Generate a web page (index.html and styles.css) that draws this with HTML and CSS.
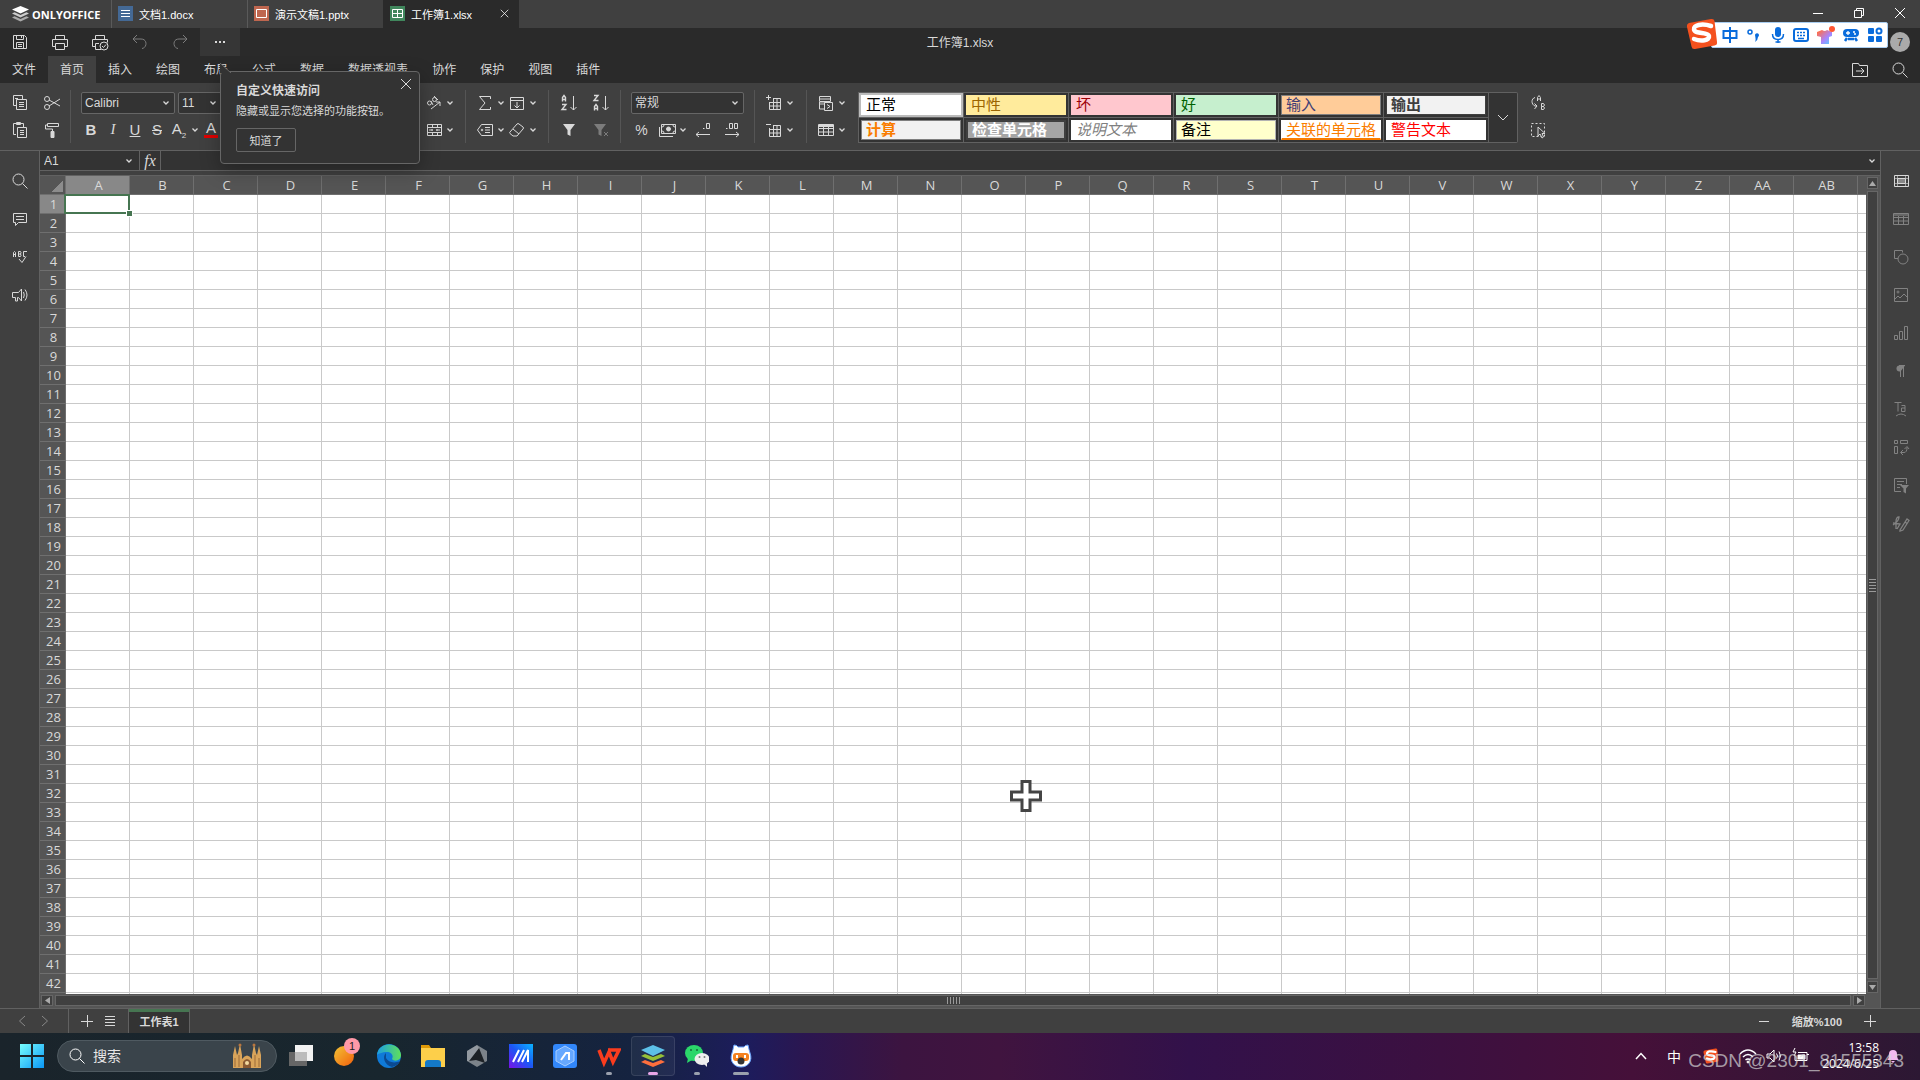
FILE: index.html
```html
<!DOCTYPE html>
<html lang="zh-CN">
<head>
  <meta charset="UTF-8" />
  <meta name="viewport" content="width=device-width, initial-scale=1.0"/>
  <title>工作簿1.xlsx</title>
  <link rel="stylesheet" href="styles.css">
</head>
<body>

  <!-- Shared icons -->
  <svg class="sprite" aria-hidden="true">
    <symbol id="chev" viewBox="0 0 8 8"><path d="M1.500 2.500 4 5l2.500-2.500" fill="none" stroke="currentColor" stroke-width="1.300"/></symbol>
    <symbol id="search" viewBox="0 0 20 20"><circle cx="8.500" cy="8.500" r="5.500"/><path d="m12.500 12.500 5 5"/></symbol>
    <symbol id="close" viewBox="0 0 12 12"><path d="m1 1 10 10M11 1 1 11"/></symbol>
    <symbol id="sogou" viewBox="0 0 32 32">
      <path d="M3 5 25 1q3-.5 3.500 2l2.500 21q.5 3-2.500 3.500L9 31q-3 .5-3.500-2.500L1 9q-.5-3 2-4z" fill="#f4511e"/>
      <path d="M25 8C16 5 7 7 8 11.500c1 5 14 2 15 6.500 1 4.500-8 6-15 3" fill="none" stroke="#fff" stroke-width="4.500" stroke-linecap="round"/>
    </symbol>
  </svg>

  <!-- Document tabs -->
  <header class="titlebar">
    <div class="brand">
      <svg width="17" height="16" viewBox="0 0 17 16"><path d="M8.500 0 17 3.500 8.500 7.500 0 3.500z" fill="#fff"/><path d="m0 7.500 2.500-1.200 6 2.700 6-2.700L17 7.500l-8.500 4z" fill="#ccc"/><path d="m0 11.500 2.500-1.200 6 2.700 6-2.700 2.500 1.200-8.500 4z" fill="#aaa"/></svg>
      <span>ONLYOFFICE</span>
    </div>
    <button class="doc-tab">
      <svg width="15" height="15" viewBox="0 0 15 15"><path d="M0 0h15v15H0z" fill="#446995"/><path d="M3 4.500h9M3 7.500h9M3 10.500h9" stroke="#fff"/></svg>
      <span>文档1.docx</span>
    </button>
    <button class="doc-tab">
      <svg width="15" height="15" viewBox="0 0 15 15"><path d="M0 0h15v15H0z" fill="#be664f"/><path d="M2.500 3.500h10v8h-10z" fill="none" stroke="#fff"/></svg>
      <span>演示文稿1.pptx</span>
    </button>
    <button class="doc-tab active">
      <svg width="15" height="15" viewBox="0 0 15 15"><path d="M0 0h15v15H0z" fill="#40865c"/><path d="M2.500 3.500h10v8h-10zM7.500 3.500v8M2.500 7.500h10" fill="none" stroke="#fff"/></svg>
      <span>工作簿1.xlsx</span>
      <svg class="line tab-close" width="9" height="9"><use href="#close"/></svg>
    </button>
    <div class="window-buttons">
      <button aria-label="最小化"><svg class="line" width="12" height="12"><path d="M1 6.500h10"/></svg></button>
      <button aria-label="还原"><svg class="line" width="12" height="12"><path d="M1.500 3.500h7v7h-7zM3.500 3.500v-2h7v7h-2"/></svg></button>
      <button aria-label="关闭"><svg class="line" width="12" height="12"><use href="#close"/></svg></button>
    </div>
  </header>

  <!-- Quick access -->
  <div class="quickbar">
    <button aria-label="保存"><svg class="line" width="20" height="20"><path d="M3.500 3.500h11l2 2v11h-13zM6.500 3.500v4h7v-4M11.500 4v2M6.500 16.500v-6h7v6M8 12.500h4M8 14.500h4"/></svg></button>
    <button aria-label="打印"><svg class="line" width="20" height="20"><path d="M5.500 7.500v-4h9v4M5.500 14.500h-3v-7h15v7h-3M5.500 11.500h9v6h-9z"/></svg></button>
    <button aria-label="快速打印"><svg class="line" width="20" height="20"><path d="M5.500 7.500v-4h9v4M5.500 14.500h-3v-7h15v3M9 11.500H5.500v6H11"/><circle cx="14" cy="14" r="4"/><path d="m12 14 1.500 1.500 2.500-3"/></svg></button>
    <button class="dim" aria-label="撤销"><svg class="line" width="20" height="20"><path d="m7 3-4 4 4 4M3 7h8c7 0 6 9 1 9.500"/></svg></button>
    <button class="dim" aria-label="重做"><svg class="line" width="20" height="20"><path d="m13 3 4 4-4 4M17 7H9C2 7 3 16 8 16.500"/></svg></button>
    <button class="more" aria-label="自定义快速访问"><svg width="20" height="20" fill="currentColor"><path d="M5 9h2v2H5zM9 9h2v2H9zM13 9h2v2h-2z"/></svg></button>
    <h1>工作簿1.xlsx</h1>
    <span class="avatar">7</span>
  </div>

  <nav class="menu">
    <button>文件</button>
    <button class="active">首页</button>
    <button>插入</button>
    <button>绘图</button>
    <button>布局</button>
    <button>公式</button>
    <button>数据</button>
    <button>数据透视表</button>
    <button>协作</button>
    <button>保护</button>
    <button>视图</button>
    <button>插件</button>
    <div class="menu-right">
      <button aria-label="打开文件位置"><svg class="line" width="20" height="20"><path d="M2.500 16.500v-13h6l1 2h8v11zM6 11h8M11 8l3 3-3 3"/></svg></button>
      <button aria-label="查找"><svg class="line" width="20" height="20"><use href="#search"/></svg></button>
    </div>
  </nav>

  <!-- Toolbar -->
  <div class="ribbon">
    <div class="group clipboard">
      <div class="row">
        <button class="tool" aria-label="复制"><svg class="line" width="20" height="20"><path d="M6 12.500H3.500v-10h9V6M5 5.500h3M6.500 6.500h10v10h-10zM9 9.500h5M9 11.500h5M9 13.500h5"/></svg></button>
        <button class="tool" aria-label="剪切"><svg class="line" width="20" height="20"><circle cx="5" cy="6" r="2.500"/><circle cx="5" cy="14" r="2.500"/><path d="m7 7 11 6M7 13l11-7"/></svg></button>
      </div>
      <div class="row">
        <button class="tool" aria-label="粘贴"><svg class="line" width="20" height="20"><path d="M6 14.500H3.500v-11h10V7M6.500 2.500h4v2h-4zM7.500 7.500h9v10h-9zM10 10.500h4M10 12.500h4M10 14.500h4"/></svg></button>
        <button class="tool" aria-label="格式刷"><svg class="line" width="20" height="20"><path d="M5.500 3.500h11v3h-11zM5 5H3.500v4h7v3"/><path d="M9 11.500h3v6H9z" fill="currentColor"/></svg></button>
      </div>
    </div>
    <div class="group font">
      <div class="row">
        <label class="combo font-name"><select aria-label="字体"><option>Calibri</option></select><svg class="chev"><use href="#chev"/></svg></label>
        <label class="combo font-size"><select aria-label="字号"><option>11</option></select><svg class="chev"><use href="#chev"/></svg></label>
      </div>
      <div class="row letters">
        <button class="letter"><b>B</b></button>
        <button class="letter"><i>I</i></button>
        <button class="letter"><u>U</u></button>
        <button class="letter"><s>S</s></button>
        <button class="split"><span class="sub">A<sub>2</sub></span><svg class="chev"><use href="#chev"/></svg></button>
        <button class="letter"><span class="font-color">A</span></button>
      </div>
    </div>
    <div class="group align">
      <div class="row">
        <button class="split" aria-label="方向"><svg class="line" width="20" height="20"><circle cx="5.500" cy="10" r="2"/><path d="m7 8 2 4M10 3l4 4"/><circle cx="10.500" cy="6.500" r="2"/><path d="m7 16 9-7M12 9h4v4"/></svg><svg class="chev"><use href="#chev"/></svg></button>
      </div>
      <div class="row">
        <button class="split" aria-label="合并"><svg class="line" width="20" height="20"><path d="M3.500 4.500h14v11h-14zM3.500 7.500h14M3.500 12.500h14M8.500 4.500v3M13.500 4.500v3M8.500 12.500v3M13.500 12.500v3M5 10h4M12 10h4M8 9v2M13 9v2"/></svg><svg class="chev"><use href="#chev"/></svg></button>
      </div>
    </div>
    <div class="group edit">
      <div class="row">
        <button class="split" aria-label="求和"><svg class="line" width="20" height="20"><path d="M15.500 6V3.500h-11L10 10l-5.500 6.500h11V14"/></svg><svg class="chev"><use href="#chev"/></svg></button>
        <button class="split" aria-label="填充"><svg class="line" width="20" height="20"><path d="M3.500 4.500h13v12h-13zM3.500 7.500h13M10 9v6M7.500 12.500 10 15l2.500-2.500"/></svg><svg class="chev"><use href="#chev"/></svg></button>
      </div>
      <div class="row">
        <button class="split" aria-label="命名区域"><svg class="line" width="20" height="20"><path d="M6.500 4.500h11v11h-11l-4-5.500zM10 7.500h5M10 10h5M10 12.500h5"/><circle cx="7" cy="10" r=".8"/></svg><svg class="chev"><use href="#chev"/></svg></button>
        <button class="split" aria-label="清除"><svg class="line" width="20" height="20"><path d="m3 12 7-8q1-1 2 0l4 3q1 1 0 2l-6 7H6l-3-2.500q-.8-.8 0-1.500zM6 9l6 5"/></svg><svg class="chev"><use href="#chev"/></svg></button>
      </div>
    </div>
    <div class="group sort">
      <div class="row">
        <button class="tool" aria-label="升序"><svg class="line" width="20" height="20"><path d="M3.500 8.500V4.500l1.500-2 1.500 2v4M3.500 6.500h3M3 11.500h4l-4 5h4.500" stroke-width="1.400"/><path d="M14.500 3v14M11.500 14l3 3 3-3"/></svg></button>
        <button class="tool" aria-label="降序"><svg class="line" width="20" height="20"><path d="M3 2.500h4l-4 5h4.500M3.500 17.500v-4l1.500-2 1.500 2v4M3.500 15.500h3" stroke-width="1.400"/><path d="M14.500 3v14M11.500 14l3 3 3-3"/></svg></button>
      </div>
      <div class="row">
        <button class="tool" aria-label="筛选"><svg width="20" height="20" fill="currentColor"><path d="M4 4h12l-4.500 6v6l-3-1.500V10z"/></svg></button>
        <button class="tool dim" aria-label="清除筛选"><svg class="line" width="20" height="20"><path d="M3 4h12l-4.500 6v6l-3-1.500V10z" fill="currentColor" stroke="none"/><path d="m13 12 4 4M17 12l-4 4"/></svg></button>
      </div>
    </div>
    <div class="group number">
      <div class="row">
        <label class="combo number-format"><select aria-label="数字格式"><option>常规</option></select><svg class="chev"><use href="#chev"/></svg></label>
      </div>
      <div class="row number-tools">
        <button class="narrow percent">%</button>
        <button class="split" aria-label="会计格式"><svg class="line" width="20" height="20"><path d="M4.500 4.500h14v9h-14zM2.500 7v9.500H16"/><circle cx="11.500" cy="9" r="2" fill="currentColor"/><path d="M5 7q2 0 2-2M16 5q0 2 2 2M5 11q2 0 2 2M16 13q0-2 2-2"/></svg><svg class="chev"><use href="#chev"/></svg></button>
        <button class="narrow" aria-label="减少小数位"><svg class="line" width="20" height="20"><path d="M10 8.500h1.500M13.500 3.500h3v5h-3zM3 14.500h14M6 12l-3 2.500L6 17"/></svg></button>
        <button class="narrow" aria-label="增加小数位"><svg class="line" width="20" height="20"><path d="M4 8.500h1.500M7.500 3.500h3v5h-3zM12.500 3.500h3v5h-3zM3 14.500h14M14 12l3 2.500-3 2.500"/></svg></button>
      </div>
    </div>
    <div class="group cells">
      <div class="row">
        <button class="split" aria-label="插入单元格"><svg class="line" width="20" height="20"><path d="M4.500 2v5M2 4.500h5M9 5.500h7.500v11h-11V9M5.500 9.500h11M5.500 13h11M9.500 5.500v11M13 5.500v11"/></svg><svg class="chev"><use href="#chev"/></svg></button>
      </div>
      <div class="row">
        <button class="split" aria-label="删除单元格"><svg class="line" width="20" height="20"><path d="M2 4.500h5M9 5.500h7.500v11h-11V8M5.500 9.500h11M5.500 13h11M9.500 5.500v11M13 5.500v11"/></svg><svg class="chev"><use href="#chev"/></svg></button>
      </div>
    </div>
    <div class="group styles">
      <div class="row">
        <button class="split" aria-label="条件格式"><svg class="line" width="20" height="20"><path d="M3.500 8.500v-5h11v5H3.500zM3.500 6h11M3.500 9v7H8"/><path d="M4 9h5v3H4z" fill="#888" stroke="none"/><path d="M8.500 9.500h8v8h-8zM11 11.500l3 2-3 2"/></svg><svg class="chev"><use href="#chev"/></svg></button>
      </div>
      <div class="row">
        <button class="split" aria-label="表格模板"><svg class="line" width="20" height="20"><path d="M2.500 4.500h15v11h-15zM2.500 8.500h15M2.500 12h15M7.500 7v8.500M12.500 7v8.500"/><path d="M3 5h14v2H3z" fill="currentColor" stroke="none"/></svg><svg class="chev"><use href="#chev"/></svg></button>
      </div>
    </div>
    <div class="gallery">
      <button class="selected"><span class="style-normal">正常</span></button>
      <button><span class="style-neutral">中性</span></button>
      <button><span class="style-bad">坏</span></button>
      <button><span class="style-good">好</span></button>
      <button><span class="style-input">输入</span></button>
      <button><span class="style-output">输出</span></button>
      <button><span class="style-calc">计算</span></button>
      <button><span class="style-check">检查单元格</span></button>
      <button><span class="style-note">说明文本</span></button>
      <button><span class="style-memo">备注</span></button>
      <button><span class="style-linked">关联的单元格</span></button>
      <button><span class="style-warn">警告文本</span></button>
    </div>
    <button class="gallery-more" aria-label="更多样式"><svg class="line" width="12" height="8"><path d="m1 1 5 5 5-5"/></svg></button>
    <div class="group replace">
      <div class="row"><button class="tool" aria-label="替换"><svg class="line" width="20" height="20"><path d="M7 4.500c-4 1-4 7 0 8.500h2M6.500 10.500 9 13l-2.500 3M9.500 8V4.500l1.500-2 1.500 2V8M9.500 6h3M13.500 10.500h2q2 1.500 0 3h-2zM13.500 13.500h2q2 1.500 0 3h-2z"/></svg></button></div>
      <div class="row"><button class="tool" aria-label="全选"><svg class="line" width="20" height="20"><path d="M3.500 3.500h13v13h-13z" stroke-dasharray="2 2"/><path d="M10 7v9l2-2 2 4 1.500-1-1.500-3.500h3z" fill="#404040"/></svg></button></div>
    </div>
  </div>

  <main class="workspace">
    <aside class="rail left">
      <button aria-label="查找"><svg class="line" width="20" height="20"><use href="#search"/></svg></button>
      <button aria-label="批注"><svg class="line" width="20" height="20"><path d="M3.500 4.500h13v9h-8l-3 3v-3h-2zM6 7.500h8M6 10.500h8"/></svg></button>
      <button aria-label="拼写检查"><svg class="line" width="20" height="20"><path d="M3.500 10V5.500l1-1 1 1V10M3.500 7.500h2M8.500 4.500v5h2q1-1 0-2.500 1-1.500 0-2.500zM8.500 7h2M17 4.500h-3.500v5H15M9 12l3 3.500 4-6"/></svg></button>
      <button aria-label="反馈和支持"><svg class="line" width="20" height="20"><path d="M2.500 7.500h6l3-3.500v12l-3-3.500h-1V16h-2v-3.500h-3zM13.500 7q1.500 3 0 6M15 4.500q4 5.500 0 11"/></svg></button>
    </aside>

    <section class="editor">
      <div class="formula-bar">
        <div class="name-box"><input type="text" value="A1" aria-label="名称框"><svg class="chev"><use href="#chev"/></svg></div>
        <button class="fx">fx</button>
        <input class="formula" type="text" aria-label="编辑栏">
        <button class="expand" aria-label="展开"><svg class="chev"><use href="#chev"/></svg></button>
      </div>
      <div class="sheet">
        <div class="viewport">
          <table id="grid"></table>
          <svg class="cell-cursor" width="32" height="32"><path d="M12 1.500h8V12h10.500v8H20v10.500h-8V20H1.500v-8H12z" fill="#fff" stroke="#444" stroke-width="3"/></svg>
        </div>
        <div class="vscroll">
          <button aria-label="向上"><svg width="7" height="5"><path d="M3.500 0 7 5H0z"/></svg></button>
          <div class="thumb"><i></i></div>
          <button aria-label="向下"><svg width="7" height="5"><path d="M0 0h7L3.500 5z"/></svg></button>
        </div>
      </div>
      <div class="hscroll">
        <button aria-label="向左"><svg width="5" height="7"><path d="M5 0v7L0 3.500z"/></svg></button>
        <div class="thumb"><i></i></div>
        <button aria-label="向右"><svg width="5" height="7"><path d="M0 0v7l5-3.500z"/></svg></button>
      </div>
    </section>

    <aside class="rail right">
      <button class="on" aria-label="单元格设置"><svg class="line" width="20" height="20"><path d="M3.500 4.500h14v11h-14z"/><path d="M4 7.500h13M4 12.500h13M6.500 5v10M14.500 5v10" stroke="#999"/><path d="M6.500 7.500h8v5h-8z" fill="#888"/></svg></button>
      <button aria-label="表格设置"><svg class="line" width="20" height="20"><path d="M2.500 4.500h15v11h-15zM2.500 8.500h15M2.500 12h15M7.500 7v8.500M12.500 7v8.500"/><path d="M3 5h14v2H3z" fill="#666" stroke="none"/></svg></button>
      <button aria-label="形状设置"><svg class="line" width="20" height="20"><path d="M7 11.500H3.500v-8h8v2"/><circle cx="12" cy="12" r="5"/></svg></button>
      <button aria-label="图像设置"><svg class="line" width="20" height="20"><path d="M3.500 3.500h13v13h-13zM4 14l3-3 2 2 4-4 3 3"/><circle cx="7" cy="7" r="1"/></svg></button>
      <button aria-label="图表设置"><svg class="line" width="20" height="20"><path d="M3.500 12.500h3v4h-3zM8.500 8.500h3v8h-3zM13.500 3.500h3v13h-3z"/></svg></button>
      <button aria-label="段落设置"><svg class="line" width="20" height="20"><path d="M14 4.500H8.500a3 3 0 0 0 0 6h1z" fill="currentColor" stroke="none"/><path d="M9.500 16V4.500M12.500 16V4.500M8 4.500h6"/></svg></button>
      <button aria-label="文字艺术设置"><svg class="line" width="20" height="20"><path d="M3.500 3.500h7M7 3.500v9M10.500 6.500h3.500v6h-3.500v-3.500h3.500M5 17q5-4 10 0"/></svg></button>
      <button aria-label="透视表设置"><svg class="line" width="20" height="20"><path d="M3.500 3.500h3v3h-3zM9.500 3.500h7v3h-7zM3.500 9.500h3v7h-3zM10 15.500h3q3 0 3-5M12 13l-2.500 2.500L12 18M13.500 12 16 9.500l2 2.500"/></svg></button>
      <button aria-label="切片器设置"><svg class="line" width="20" height="20"><path d="M10 16.500H3.500v-13h12V9M6 6.500h7M6 9.500h5M6 12.500h3"/><path d="M9 10h9l-3 3.500v5l-2.500-1.500v-3.500z" fill="currentColor" stroke="none"/></svg></button>
      <button aria-label="签名设置"><svg class="line" width="20" height="20"><path d="M2 12q6-4 6-8-3 0-3 5v7M2 10l7 1-3 5M9 17l7-11 2 1.500L12 17l-3 1zM14 9l2 1.500" stroke-width="1.300"/></svg></button>
    </aside>
  </main>

  <!-- Sheet tabs -->
  <footer class="statusbar">
    <div class="sheet-nav">
      <button aria-label="上一张"><svg class="line" width="8" height="12"><path d="M7 1 1.500 6 7 11"/></svg></button>
      <button aria-label="下一张"><svg class="line" width="8" height="12"><path d="m1 1 5.500 5L1 11"/></svg></button>
    </div>
    <div class="sheet-actions">
      <button aria-label="添加工作表"><svg class="line" width="12" height="12"><path d="M0 6.500h12M6.500 0v12"/></svg></button>
      <button aria-label="工作表列表"><svg class="line" width="12" height="12"><path d="M1 1.500h10M1 4.500h10M1 7.500h10M1 10.500h10"/></svg></button>
    </div>
    <button class="sheet-tab">工作表1</button>
    <div class="zoom">
      <button aria-label="缩小"><svg class="line" width="12" height="12"><path d="M1 6.500h10"/></svg></button>
      <span>缩放%100</span>
      <button aria-label="放大"><svg class="line" width="12" height="12"><path d="M0 6.500h12M6.500 0v12"/></svg></button>
    </div>
  </footer>

  <!-- Windows taskbar -->
  <div class="taskbar">
    <button class="start" aria-label="开始"><svg width="24" height="24"><defs><linearGradient id="win" x2="1" y2="1"><stop stop-color="#7ff"/><stop offset="1" stop-color="#0a96f5"/></linearGradient></defs><path d="M0 0h11v11H0zM13 0h11v11H13zM0 13h11v11H0zM13 13h11v11H13z" fill="url(#win)"/></svg></button>
    <label class="search">
      <svg class="line" width="20" height="20"><use href="#search"/></svg>
      <input type="text" placeholder="搜索" aria-label="搜索">
      <svg width="30" height="26"><path d="M1 25V12l2-9 2 9 1-2 2-9 2 11v4q5-7 10 0v-4l2-11 2 9 1 2 2-9 2 9v13z" fill="#d9a45a"/><path d="M11 25v-6q4-6 8 0v6z" fill="#8a5a33"/><path d="M3 15v9M7 12v12M23 12v12M27 15v9" stroke="#9b6a38"/><circle cx="15" cy="20" r="2" fill="#f3d9a0"/><circle cx="8" cy="2" r="1.500" fill="#b9763f"/><circle cx="22" cy="2" r="1.500" fill="#b9763f"/></svg>
    </label>
    <div class="apps">
      <button aria-label="任务视图"><svg width="24" height="24"><path d="M0 8h18v14H0z" fill="#666"/><path d="M6 1h18v16H6z" fill="#f2f2f2"/><path d="M6 8h12v9H6z" fill="#bbb"/></svg></button>
      <button aria-label="小组件"><svg width="24" height="24"><defs><linearGradient id="org" y2="1" x2="1"><stop stop-color="#f2c335"/><stop offset="1" stop-color="#f2600d"/></linearGradient></defs><circle cx="11" cy="12" r="10" fill="url(#org)"/></svg><span class="badge">1</span></button>
      <button aria-label="Edge"><svg width="24" height="24"><defs><linearGradient id="edge"><stop stop-color="#1b9de2"/><stop offset="1" stop-color="#5fe05a"/></linearGradient></defs><circle cx="12" cy="12" r="12" fill="#0f7ad8"/><path d="M0 11C1-3 23-3 24 11c0 6-7 7-9 4 2-4-1-7-5-7-5 0-9 2-10 3z" fill="url(#edge)"/><path d="M9 9c-4 3-2 12 6 14 4-1 7-3 8-6-6 3-12 1-14-3z" fill="#0b4a92"/></svg></button>
      <button aria-label="文件资源管理器"><svg width="24" height="24"><path d="M0 1h8l2 3H0z" fill="#e09a08"/><path d="M0 4h24v19H0z" fill="#fdcf4a"/><path d="M4 23v-4q0-3 3-3h10q3 0 3 3v4z" fill="#1479c8"/></svg></button>
      <button aria-label="Armoury Crate"><svg width="24" height="24"><path d="m12 1 10 6v10l-10 6-10-6V7z" fill="#7c838a"/><path d="m14 4 6 15-9-3-7 1z" fill="#1c2126"/><path d="m12 1 2 3L4 17l-2 0V7z" fill="#b7bcc1" opacity=".4"/></svg></button>
      <button aria-label="MyASUS"><svg width="24" height="24"><defs><linearGradient id="asus" y1="1" y2="0" x2="1"><stop stop-color="#7a12e8"/><stop offset=".5" stop-color="#1d55f5"/><stop offset="1" stop-color="#0ab4ff"/></linearGradient></defs><path d="M0 0h24v24H0z" fill="url(#asus)"/><path d="m4 18 6-12M9 18l6-12M13 18l6-12v12" stroke="#fff" stroke-width="2" fill="none"/></svg></button>
      <button aria-label="ASUS"><svg width="24" height="24"><rect width="24" height="24" rx="3" fill="#3287fa"/><path d="m12 2 9 5v10l-9 5-9-5V7z" fill="#66a8ff" stroke="#a8ceff"/><path d="m8 16 5-7h3v7" stroke="#fff" stroke-width="2" fill="none"/></svg></button>
      <button aria-label="WPS"><svg width="24" height="24"><path d="m2 6 5 13 5-11 4 10 6-12H11" fill="none" stroke="#fa3c1e" stroke-width="3.500"/></svg><i class="dot"></i></button>
      <button class="current" aria-label="ONLYOFFICE"><svg width="24" height="24"><path d="m0 18 4-2 8 3 8-3 4 2-12 5z" fill="#ff6f3d"/><path d="m0 12 4-2 8 3 8-3 4 2-12 5z" fill="#95c038"/><path d="m12 1 12 5-12 6L0 6z" fill="#5dc0e8"/></svg><i class="dot"></i></button>
      <button aria-label="微信"><svg width="24" height="24"><ellipse cx="9" cy="9" rx="9" ry="8" fill="#2bd66a"/><path d="m3 14-1 5 5-3z" fill="#2bd66a"/><ellipse cx="17" cy="15" rx="7.500" ry="6" fill="#eee"/><path d="m19 20 3 3v-4z" fill="#eee"/><g fill="#176b3a"><circle cx="6" cy="6" r="1"/><circle cx="12" cy="6" r="1"/></g><g fill="#777"><circle cx="14.500" cy="13" r="1"/><circle cx="19.500" cy="13" r="1"/></g></svg><i class="dot"></i></button>
      <button aria-label="助手"><svg width="24" height="24"><path d="M5 1q3 0 4 2h6q1-2 4-2 1 5 2 8c3 8-2 14-9 14S0 17 3 9q1-3 2-8z" fill="#fff" stroke="#6aa5ff"/><rect x="4" y="9" width="16" height="8" rx="3" fill="#f58220"/><path d="M8 11v3M16 11v3" stroke="#fff" stroke-width="2"/><circle cx="12" cy="17" r="3.500" fill="#333"/></svg><i class="dot wide"></i></button>
    </div>
    <div class="tray">
      <svg class="line up" width="12" height="8"><path d="m1 7 5-5.500L11 7" stroke-width="1.500"/></svg>
      <span class="lang">中</span>
      <svg class="sg" width="16" height="16"><use href="#sogou"/></svg>
      <svg class="line" width="18" height="16"><path d="M1 6q8-8 16 0M4 9q5-5 10 0M6.500 12q2.500-2 5 0" stroke-width="1.500"/><circle cx="9" cy="14" r="1" fill="#fff"/></svg>
      <svg class="line" width="18" height="16"><path d="M2 6h3l4-4v12l-4-4H2zM11.500 5.500q2 2.500 0 5M14 3.500q3 4.500 0 9"/></svg>
      <svg class="line" width="18" height="16"><path d="M7 4.500h9v8H4V8M4 0 2 4h3L3 8M16 6.500h2"/><path d="M7 7h7v4H7z" fill="#fff"/></svg>
      <div class="clock"><time>13:58</time><time>2024/6/25</time></div>
      <svg class="bell" width="12" height="16"><path d="M0 12q2-1 2-6a4 4 0 0 1 8 0q0 5 2 6zM4 13h4l-2 2z" fill="#f3b9f0"/></svg>
    </div>
  </div>

  <!-- Quick access hint -->
  <div class="hint" role="dialog">
    <svg class="pointer" width="12" height="10"><path d="M0 0v10h11z" fill="#333"/><path d="m0 0 11 10" stroke="#666"/></svg>
    <button class="hint-close" aria-label="关闭"><svg class="line" width="12" height="12"><use href="#close"/></svg></button>
    <h2>自定义快速访问</h2>
    <p>隐藏或显示您选择的功能按钮。</p>
    <button class="ok">知道了</button>
  </div>

  <!-- Input method bar -->
  <div class="ime">
    <svg class="ime-logo" width="32" height="32"><use href="#sogou"/></svg>
    <svg width="16" height="16"><path d="M1.500 4h13v7h-13zM8 0v16" fill="none" stroke="#0a6cdc" stroke-width="2"/></svg>
    <svg width="16" height="16"><circle cx="4" cy="5" r="2" fill="none" stroke="#0a6cdc" stroke-width="1.500"/><path d="M9 8a2 2 0 1 1 3 2q0 3-3 5 1-2 .5-4z" fill="#0a6cdc"/></svg>
    <svg width="16" height="16"><rect x="5" width="6" height="10" rx="3" fill="#0a6cdc"/><path d="M2.500 7q0 5.500 5.500 5.500T13.500 7M8 13v3M5.500 15h5" fill="none" stroke="#0a6cdc" stroke-width="1.500"/></svg>
    <svg width="16" height="16"><rect x="1" y="2" width="14" height="12" rx="2" fill="none" stroke="#0a6cdc" stroke-width="2"/><path d="M4 5.500h8M4 8.500h8" stroke="#0a6cdc" stroke-width="1.500" stroke-dasharray="2 1"/><path d="M5 11.500h6" stroke="#0a6cdc" stroke-width="1.500"/></svg>
    <svg width="18" height="18"><defs><linearGradient id="shirt" x2="1" y2="1"><stop offset=".1" stop-color="#ff6f4a"/><stop offset=".6" stop-color="#a884ff"/><stop offset="1" stop-color="#4ad8ff"/></linearGradient></defs><path d="M5 4q3 2 5 0l5 2v4l-3 1v7H4v-7l-4-1V6z" fill="url(#shirt)"/><circle cx="15" cy="3" r="3" fill="#ff5533"/></svg>
    <svg width="16" height="16"><path d="M4 2h8q4 0 4 4t-4 4H4Q0 10 0 6t4-4z" fill="#0a6cdc"/><path d="M5 4v4M3 6h4M10 5h2M11 7h2" stroke="#fff" stroke-width="1.300"/><path d="m2 14 2-3M14 14l-2-3M5 12h6" stroke="#0a6cdc" stroke-width="2.500"/></svg>
    <svg width="16" height="16" fill="#0a6cdc"><rect x="1" y="1" width="6" height="6" rx="1"/><circle cx="12" cy="4" r="2.500" fill="none" stroke="#0a6cdc" stroke-width="2"/><rect x="1" y="9" width="6" height="6" rx="1"/><rect x="9" y="9" width="6" height="6" rx="1"/></svg>
  </div>

  <div class="watermark">CSDN @2301_81555343</div>

  <script src="grid.js"></script>
</body>
</html>
```
FILE: styles.css
```css
* {
  box-sizing: border-box;
}

body {
  margin: 0;
  height: 100vh;
  display: flex;
  flex-direction: column;
  overflow: hidden;
  background: #404040;
  color: #d9d9d9;
  font-family: "Liberation Sans", "Noto Sans CJK SC", sans-serif;
  font-size: 12px;
}

button,
input,
select {
  font: inherit;
  color: inherit;
  background: none;
  border: 0;
  margin: 0;
  padding: 0;
  border-radius: 0;
  outline: 0;
}

button {
  display: flex;
  align-items: center;
  justify-content: center;
}

svg {
  display: block;
  flex: none;
}

.sprite {
  position: absolute;
  width: 0;
  height: 0;
}

.line {
  fill: none;
  stroke: currentColor;
}

.chev {
  width: 8px;
  height: 8px;
}

.dim {
  color: #7c7c7c;
}

/* Title bar */
.titlebar {
  display: flex;
  height: 28px;
  flex: none;
  padding-bottom: 0;
  color: #fff;
}

.brand {
  width: 111px;
  display: flex;
  align-items: center;
  gap: 3px;
  padding-left: 12px;
  font: bold 11px "Open Sans", sans-serif;
}

.doc-tab {
  width: 136px;
  justify-content: flex-start;
  gap: 6px;
  padding: 0 0 1px 6px;
  border-left: 1px solid #5a5a5a;
  font-size: 11px;
}

.doc-tab.active {
  background: #2a2a2a;
  border-color: #2a2a2a;
}

.tab-close {
  margin-left: auto;
  margin-right: 10px;
}

.window-buttons {
  margin-left: auto;
  display: flex;
}

.window-buttons button {
  width: 41px;
  padding-bottom: 2px;
}

/* Quick access */
.quickbar {
  display: flex;
  align-items: center;
  height: 28px;
  flex: none;
  background: #2a2a2a;
  position: relative;
}

.quickbar button {
  width: 40px;
  height: 28px;
}

.quickbar .more {
  background: #363636;
}

.quickbar h1 {
  position: absolute;
  left: 0;
  right: 0;
  margin: 0;
  padding-bottom: 2px;
  text-align: center;
  font-size: 12px;
  font-weight: normal;
  pointer-events: none;
}

.avatar {
  margin-left: auto;
  margin-right: 10px;
  width: 20px;
  height: 20px;
  line-height: 20px;
  border-radius: 50%;
  background: #aaa;
  color: #333;
  text-align: center;
  font-size: 11px;
}

.menu {
  display: flex;
  height: 27px;
  flex: none;
  background: #2a2a2a;
}

.menu button {
  padding: 0 12px 2px;
}

.menu .active {
  background: #404040;
}

.menu-right {
  margin-left: auto;
  display: flex;
}

.menu-right button {
  width: 40px;
  padding: 0;
}

/* Ribbon */
.ribbon {
  display: flex;
  height: 68px;
  flex: none;
  padding: 7px 0;
  border-bottom: 1px solid #616161;
}

.group {
  display: flex;
  flex-direction: column;
  border-right: 1px solid #555;
}

.row {
  display: flex;
  align-items: center;
  height: 27px;
}

.row:first-child {
  height: 28px;
}

.tool {
  width: 32px;
}

.narrow {
  width: 29px;
}

.split {
  width: 32px;
  gap: 2px;
}

.letter {
  width: 22px;
  font-size: 15px;
}

.letter i {
  font-family: "Liberation Serif", serif;
}

.sub {
  width: 20px;
  font-size: 15px;
}

.sub sub {
  font-size: 8px;
}

.font-color {
  border-bottom: 3px solid #e00000;
  line-height: 14px;
  padding: 0 2px;
}

.percent {
  font-size: 14px;
}

.clipboard {
  width: 71px;
  padding-left: 4px;
}

.font {
  width: 352px;
  padding-left: 10px;
  border-right: 0;
}

.font .row {
  gap: 3px;
}

.font .letters {
  gap: 0;
  margin-left: -1px;
}

.align {
  width: 43px;
}

.edit {
  width: 83px;
  padding-left: 8px;
}

.sort {
  width: 72px;
  padding-left: 4px;
}

.number {
  width: 134px;
  padding-left: 10px;
}

.number-tools {
  margin-left: -4px;
}

.cells {
  width: 52px;
  padding-left: 8px;
}

.styles {
  width: 51px;
  padding-left: 8px;
  border-right: 0;
}

.combo {
  position: relative;
  height: 22px;
  background: #333;
  border: 1px solid #666;
  border-radius: 2px;
}

.combo select {
  appearance: none;
  width: 100%;
  height: 20px;
  padding-left: 3px;
}

.combo .chev {
  position: absolute;
  right: 4px;
  top: 6px;
}

.font-name {
  width: 94px;
}

.font-size {
  width: 48px;
}

.font-size .chev {
  right: 8px;
}

.number-format {
  width: 113px;
}

/* Cell styles */
.gallery {
  display: grid;
  grid-template-columns: repeat(6, 105px);
  grid-template-rows: 25px 25px;
  height: 51px;
  margin-top: 2px;
  border-top: 1px solid #616161;
  border-left: 1px solid #616161;
}

.gallery button {
  padding: 2px;
  background: #333;
  border-right: 1px solid #616161;
  border-bottom: 1px solid #616161;
}

.gallery .selected {
  background: #bbb;
}

.gallery span {
  width: 100%;
  height: 20px;
  padding-left: 4px;
  border: 1px solid transparent;
  background: #fff;
  color: #000;
  font-size: 15px;
  line-height: 17px;
  text-align: left;
}

.gallery .style-neutral {
  background: #ffeb9c;
  color: #9c6500;
}

.gallery .style-bad {
  background: #ffc7ce;
  color: #9c0006;
}

.gallery .style-good {
  background: #c6efce;
  color: #006100;
}

.gallery .style-input {
  background: #ffcc99;
  color: #3f3f76;
  border-color: #7f7f7f;
}

.gallery .style-output {
  background: #f2f2f2;
  color: #3f3f3f;
  border-color: #3f3f3f;
  font-weight: bold;
}

.gallery .style-calc {
  background: #f2f2f2;
  color: #fa7d00;
  border-color: #7f7f7f;
  font-weight: bold;
}

.gallery .style-check {
  background: #a5a5a5;
  color: #fff;
  border: 2px solid #3f3f3f;
  line-height: 15px;
  font-weight: bold;
}

.gallery .style-note {
  color: #7f7f7f;
  font-style: italic;
}

.gallery .style-memo {
  background: #ffffcc;
  border-color: #b2b2b2;
}

.gallery .style-linked {
  color: #fa7d00;
  border-bottom: 2px solid #fa7d00;
}

.gallery .style-warn {
  color: #f00;
}

.gallery-more {
  width: 29px;
  height: 51px;
  margin-top: 2px;
  background: #333;
  border: 1px solid #616161;
  border-left: 0;
  border-radius: 0 2px 2px 0;
}

.replace {
  padding-left: 4px;
  border-right: 0;
}

/* Workspace */
.workspace {
  flex: 1;
  display: flex;
  min-height: 0;
}

.rail {
  width: 40px;
  flex: none;
  padding-top: 11px;
}

.rail button {
  width: 100%;
  height: 38px;
}

.rail.left {
  border-right: 1px solid #616161;
}

.rail.right {
  border-left: 1px solid #616161;
  color: #828282;
}

.rail.right .on {
  color: #d9d9d9;
}

.editor {
  flex: 1;
  min-width: 0;
  display: flex;
  flex-direction: column;
}

.formula-bar {
  display: flex;
  height: 20px;
  flex: none;
  margin-bottom: 4px;
  background: #333;
  border-bottom: 1px solid #616161;
}

.name-box {
  display: flex;
  align-items: center;
  width: 100px;
  padding: 0 6px 0 4px;
  border-right: 1px solid #616161;
}

.name-box input {
  flex: 1;
  min-width: 0;
}

.fx {
  width: 21px;
  border-right: 1px solid #616161;
  font: italic 16px "Liberation Serif", serif;
}

.formula {
  flex: 1;
}

.expand {
  width: 16px;
}

.sheet {
  flex: 1;
  min-height: 0;
  display: flex;
  border-top: 1px solid #616161;
}

.viewport {
  flex: 1;
  min-width: 0;
  overflow: hidden;
  position: relative;
  background: #fff;
}

#grid {
  width: 1882px;
  table-layout: fixed;
  border-collapse: separate;
  border-spacing: 0;
}

#grid th,
#grid td {
  height: 19px;
  padding: 0;
  border-right: 1px solid #c9c9c9;
  border-bottom: 1px solid #c9c9c9;
}

#grid th {
  padding-left: 2px;
  background: #555;
  border-color: #6f6f6f;
  color: #d9d9d9;
  font: 13px/18px "Open Sans", sans-serif;
}

#grid .corner {
  width: 26px;
  background: linear-gradient(135deg, transparent 50%, #8c8c8c 50%) 12px 5px / 11px 11px no-repeat #555;
}

#grid th.sel {
  background: #888;
}

#grid .current {
  position: relative;
}

#grid .current::before {
  content: "";
  position: absolute;
  inset: -1px -1px -1px -2px;
  border: 2px solid #467551;
}

#grid .current::after {
  content: "";
  position: absolute;
  right: -3px;
  bottom: -3px;
  width: 5px;
  height: 5px;
  background: #467551;
  outline: 1px solid #fff;
}

/* Mouse pointer over the cells */
.cell-cursor {
  position: absolute;
  left: 970px;
  top: 604px;
}

.vscroll,
.hscroll {
  display: flex;
  flex: none;
  gap: 2px;
  background: #555;
  fill: #aaa;
}

.vscroll {
  width: 14px;
  flex-direction: column;
  padding: 1px 2px 1px 1px;
}

.hscroll {
  height: 14px;
  padding: 1px 15px 2px 1px;
}

.vscroll button,
.hscroll button {
  flex: none;
  background: #404040;
  border: 1px solid #666;
}

.vscroll button {
  height: 12px;
}

.hscroll button {
  width: 12px;
}

.thumb {
  flex: 1;
  display: flex;
  align-items: center;
  justify-content: center;
  background: #404040;
  border: 1px solid #666;
}

.thumb i {
  width: 7px;
  height: 13px;
  background: repeating-linear-gradient(#999 0 1px, transparent 1px 3px);
}

.hscroll .thumb i {
  width: 13px;
  height: 7px;
  background: repeating-linear-gradient(90deg, #999 0 1px, transparent 1px 3px);
}

/* Status bar */
.statusbar {
  display: flex;
  height: 25px;
  flex: none;
  border-top: 1px solid #616161;
  font-size: 11px;
  font-weight: bold;
}

.sheet-nav,
.sheet-actions {
  display: flex;
  align-items: center;
  border-right: 1px solid #616161;
}

.sheet-nav {
  width: 69px;
  gap: 15px;
  padding-left: 18px;
  color: #888;
}

.sheet-actions {
  width: 60px;
  gap: 11px;
  padding-left: 12px;
}

.sheet-tab {
  width: 61px;
  padding-bottom: 4px;
  background: #333;
  border-top: 3px solid #467551;
  border-right: 1px solid #616161;
}

.zoom {
  margin-left: auto;
  padding-right: 44px;
  display: flex;
  align-items: center;
  gap: 22px;
}

.zoom span {
  padding-bottom: 1px;
}

/* Taskbar */
.taskbar {
  display: flex;
  align-items: center;
  height: 47px;
  flex: none;
  padding-bottom: 2px;
  color: #fff;
  background: linear-gradient(90deg, #1a242b 0, #18262e 20%, #152340 33%, #1d1c5c 39%, #2b1650 42%, #3c1440 47%, #40143f 52%, #32114a 62%, #3c1040 75%, #451039 85%, #2c1833 100%);
}

.start {
  width: 57px;
  padding-right: 13px;
  justify-content: flex-end;
}

.search {
  width: 220px;
  height: 32px;
  display: flex;
  align-items: center;
  padding: 0 14px 0 9px;
  border: 1px solid #4f5a61;
  border-radius: 16px;
  background: #3a444b;
}

.search input {
  flex: 1;
  min-width: 0;
  padding-left: 6px;
  font-size: 14px;
}

.search input::placeholder {
  color: #e6e6e6;
}

.apps {
  display: flex;
  padding-left: 2px;
}

.apps button {
  position: relative;
  width: 44px;
  height: 40px;
}

.apps .current {
  background: rgba(255, 255, 255, 0.05);
  border: 1px solid rgba(255, 255, 255, 0.1);
  border-radius: 4px;
}

.badge {
  position: absolute;
  left: 21px;
  top: 2px;
  width: 16px;
  height: 16px;
  line-height: 16px;
  border-radius: 50%;
  background: #ff99a8;
  color: #222;
  font-size: 11px;
}

.dot {
  position: absolute;
  left: 50%;
  bottom: 1px;
  width: 6px;
  height: 3px;
  border-radius: 2px;
  background: #9aa0ad;
  transform: translateX(-50%);
}

.dot.wide {
  width: 16px;
}

.current .dot {
  bottom: 0;
  width: 10px;
  background: #e7a6e8;
}

.tray {
  margin-left: auto;
  padding-right: 21px;
  display: flex;
  align-items: center;
  gap: 8px;
}

.up {
  margin-right: 12px;
}

.lang {
  margin-right: 14px;
  font-size: 14px;
}

.sg {
  margin-right: 12px;
}

.clock {
  width: 62px;
  text-align: right;
  font: 12px/16px "Open Sans", sans-serif;
}

.clock time {
  display: block;
}

/* Overlays */
.hint {
  position: absolute;
  left: 220px;
  top: 71px;
  width: 200px;
  height: 93px;
  padding: 10px 15px;
  background: #333;
  border: 1px solid #666;
  border-radius: 4px;
  box-shadow: 0 6px 20px rgba(0, 0, 0, 0.3);
}

.hint h2 {
  margin: 0;
  font-size: 12px;
  line-height: 18px;
}

.hint p {
  margin: 2px 0 8px;
  font-size: 11px;
  line-height: 18px;
  white-space: nowrap;
}

.hint .ok {
  width: 60px;
  height: 24px;
  border: 1px solid #666;
  border-radius: 2px;
  font-size: 11px;
}

.pointer {
  position: absolute;
  left: -1px;
  top: -9px;
}

.hint-close {
  position: absolute;
  right: 7px;
  top: 6px;
}

.ime {
  position: absolute;
  right: 32px;
  top: 22px;
  height: 26px;
  width: 177px;
  padding: 0 4px 0 10px;
  display: flex;
  align-items: center;
  justify-content: space-between;
  background: #fff;
  border: 1px solid #a9cdf0;
  border-radius: 2px;
}

.ime-logo {
  position: absolute;
  left: -26px;
  top: -5px;
}

.watermark {
  position: absolute;
  right: 16px;
  bottom: 6px;
  color: rgba(215, 215, 215, 0.7);
  font-size: 19px;
  line-height: 26px;
}
```
FILE: grid.js
```js
const ROWS = 42;
const COLS = 28;

function colName(n) {
  return n < 26 ? String.fromCharCode(65 + n) : "A" + String.fromCharCode(65 + n - 26);
}

let html = '<thead><tr><th class="corner"></th>';
for (let c = 0; c <= COLS; c++) {
  html += `<th${c === 0 ? ' class="sel"' : ""}>${c < COLS ? colName(c) : ""}</th>`;
}
html += "</tr></thead><tbody>";

// one extra row and column run under the scrollbars
for (let r = 1; r <= ROWS + 1; r++) {
  html += `<tr><th${r === 1 ? ' class="sel"' : ""}>${r <= ROWS ? r : ""}</th>`;
  for (let c = 0; c <= COLS; c++) {
    html += r === 1 && c === 0 ? '<td class="current"></td>' : "<td></td>";
  }
  html += "</tr>";
}
document.getElementById("grid").innerHTML = html + "</tbody>";
```
